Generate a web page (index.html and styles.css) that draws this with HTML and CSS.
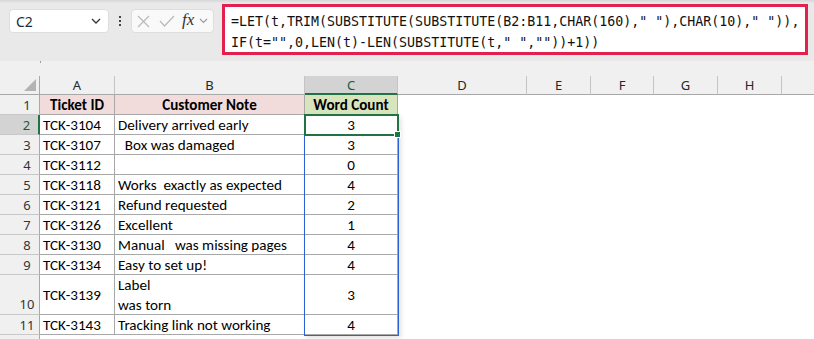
FILE: index.html
```html
<!DOCTYPE html>
<html lang="en">
<head>
    <meta charset="UTF-8">
    <meta name="viewport" content="width=device-width, initial-scale=1.0">
    <title>Word Count</title>
    <link rel="stylesheet" href="styles.css">
</head>
<body>
    <div class="formula-bar">
        <div class="name-box">
            <span>C2</span>
            <svg width="10" height="6" viewBox="0 0 10 6"><path d="M1 1l4 4 4-4" fill="none" stroke="#333" stroke-width="1.3"/></svg>
        </div>
        <div class="dots"><i></i><i></i><i></i></div>
        <div class="fx-box">
            <svg width="13" height="13" viewBox="0 0 13 13"><path d="M1 1l11 11M12 1L1 12" stroke="#b9b9b9" stroke-width="1.2"/></svg>
            <svg width="16" height="12" viewBox="0 0 16 12"><path d="M1 6l4.5 5L15 1" fill="none" stroke="#b9b9b9" stroke-width="1.2"/></svg>
            <span class="fx">fx</span>
            <svg width="9" height="6" viewBox="0 0 9 6"><path d="M1 1l3.5 3.5L8 1" fill="none" stroke="#9a9a9a" stroke-width="1.1"/></svg>
        </div>
        <div class="formula">
            <div class="line">=LET(t,TRIM(SUBSTITUTE(SUBSTITUTE(B2:B11,CHAR(160)," "),CHAR(10)," ")),</div>
            <div class="line">IF(t="",0,LEN(t)-LEN(SUBSTITUTE(t," ",""))+1))</div>
        </div>
    </div>

    <div class="band"></div>

    <div class="sheet">
        <div class="corner"><span class="tri"></span></div>
        <div class="ch">A</div>
        <div class="ch">B</div>
        <div class="ch sel">C</div>
        <div class="ch">D</div>
        <div class="ch">E</div>
        <div class="ch">F</div>
        <div class="ch">G</div>
        <div class="ch">H</div>
        <div class="ch last"></div>

        <div class="blank"></div>

        <div class="rh">1</div>
        <div class="c head pink">Ticket ID</div>
        <div class="c head pink">Customer Note</div>
        <div class="c head green">Word Count</div>

        <div class="rh sel">2</div>
        <div class="c">TCK-3104</div>
        <div class="c">Delivery arrived early</div>
        <div class="c num">3</div>

        <div class="rh">3</div>
        <div class="c">TCK-3107</div>
        <div class="c">  Box was damaged</div>
        <div class="c num">3</div>

        <div class="rh">4</div>
        <div class="c">TCK-3112</div>
        <div class="c"></div>
        <div class="c num">0</div>

        <div class="rh">5</div>
        <div class="c">TCK-3118</div>
        <div class="c">Works  exactly as expected</div>
        <div class="c num">4</div>

        <div class="rh">6</div>
        <div class="c">TCK-3121</div>
        <div class="c">Refund requested</div>
        <div class="c num">2</div>

        <div class="rh">7</div>
        <div class="c">TCK-3126</div>
        <div class="c">Excellent</div>
        <div class="c num">1</div>

        <div class="rh">8</div>
        <div class="c">TCK-3130</div>
        <div class="c">Manual   was missing pages</div>
        <div class="c num">4</div>

        <div class="rh">9</div>
        <div class="c">TCK-3134</div>
        <div class="c">Easy to set up!</div>
        <div class="c num">4</div>

        <div class="rh bottom">10</div>
        <div class="c">TCK-3139</div>
        <div class="c wrap">Label<br>was torn</div>
        <div class="c num">3</div>

        <div class="rh">11</div>
        <div class="c">TCK-3143</div>
        <div class="c">Tracking link not working</div>
        <div class="c num">4</div>

        <div class="rh"></div>
        <div class="empty"></div>

        <!-- spill range and active cell sit over the grid -->
        <div class="spill"></div>
        <div class="active"><span class="handle"></span></div>
    </div>
</body>
</html>
```

FILE: styles.css
```css
body {
    margin: 0;
    width: 814px;
    height: 339px;
    overflow: hidden;
    background-color: #fff;
    font-family: "Segoe UI", "Noto Sans", Arial, sans-serif;
}
.formula-bar {
    height: 61px;
    background: linear-gradient(#d6d6d6, #e9e9e9 3px);
    display: flex;
    align-items: flex-start;
    box-sizing: border-box;
}
.name-box {
    margin: 9px 0 0 9px;
    width: 100px;
    height: 24px;
    box-sizing: border-box;
    background-color: #fff;
    border: 1px solid #dedede;
    border-radius: 4px;
    display: flex;
    align-items: center;
    justify-content: space-between;
    padding: 0 7px 0 6px;
    font-size: 14px;
    color: #1e2a44;
}
.dots {
    margin: 16px 0 0 10px;
    width: 3px;
    display: flex;
    flex-direction: column;
    gap: 2px;
}
.dots i {
    display: block;
    width: 2px;
    height: 2px;
    background-color: #444;
}
.fx-box {
    margin: 9px 0 0 9px;
    width: 83px;
    height: 24px;
    box-sizing: border-box;
    background-color: #f9f9f9;
    border: 1px solid #dedede;
    border-radius: 4px;
    display: flex;
    align-items: center;
    padding: 0 0 0 5px;
}
.fx-box svg:first-child {
    margin-right: 9px;
}
.fx {
    margin: -2px 5px 0 7px;
    font-family: "Liberation Serif", serif;
    font-style: italic;
    font-size: 17px;
    color: #333;
}
.formula {
    margin: 4px 0 0 8px;
    width: 586px;
    height: 51px;
    box-sizing: border-box;
    background-color: #fff;
    border: 3px solid #e2214e;
    padding: 4px 0 0 6px;
    font-family: "DejaVu Sans Mono", "Liberation Mono", monospace;
    font-size: 13.3px;
    line-height: 21px;
    color: #111;
}
.formula .line {
    white-space: pre;
}
.band {
    height: 15px;
    background-color: #f0f0f0;
    position: relative;
}
.band::after {
    content: "";
    position: absolute;
    left: 40px;
    top: 0;
    width: 1px;
    height: 2px;
    background-color: #999;
}
.sheet {
    position: relative;
    display: grid;
    grid-template-columns: 40px 75px 190px 93px 129px 64px 63px 64px 64px 1fr;
    grid-template-rows: 19px repeat(9, 20px) 40px 20px 20px;
    font-family: Carlito, Calibri, Lato, sans-serif;
    font-size: 15.1px;
    color: #000;
}
.corner {
    background-color: #f0f0f0;
    border-right: 1px solid #a8a8a8;
    border-bottom: 1px solid #a8a8a8;
    position: relative;
}
.tri {
    position: absolute;
    right: 3px;
    bottom: 3px;
    width: 0;
    height: 0;
    border-left: 12px solid transparent;
    border-bottom: 12px solid #b4b4b4;
}
.ch {
    background-color: #f0f0f0;
    border-right: 1px solid #c4c4c4;
    border-bottom: 1px solid #a8a8a8;
    font-family: "Segoe UI", "Noto Sans", Arial, sans-serif;
    font-size: 13px;
    color: #262626;
    display: flex;
    align-items: center;
    justify-content: center;
}
.ch.last {
    border-right: none;
}
.ch.sel {
    background-color: #d3d3d3;
    border-bottom: 2px solid #217346;
    color: #185c37;
}
.rh {
    background-color: #f0f0f0;
    border-right: 1px solid #a8a8a8;
    border-bottom: 1px solid #c8c8c8;
    font-family: "Segoe UI", "Noto Sans", Arial, sans-serif;
    font-size: 13px;
    color: #333;
    display: flex;
    align-items: center;
    justify-content: center;
    padding-left: 15px;
}
.rh.sel {
    background-color: #d3d3d3;
    border-right: 2px solid #217346;
    color: #185c37;
}
.rh.bottom {
    align-items: flex-end;
    padding-bottom: 1px;
}
.c {
    border-right: 1px solid #a8a8a8;
    border-bottom: 1px solid #a8a8a8;
    padding: 0 3px;
    display: flex;
    align-items: center;
    white-space: pre;
    overflow: hidden;
}
.c.wrap {
    display: block;
    line-height: 20px;
}
.head {
    justify-content: center;
    font-weight: bold;
}
.pink {
    background-color: #f2dcdb;
}
.green {
    background-color: #d8e4bc;
}
.num {
    justify-content: center;
}
.blank {
    grid-column: 5 / -1;
    grid-row: 2 / -1;
    background-color: #fff;
}
.empty {
    grid-column: span 3;
}
.spill {
    position: absolute;
    left: 304px;
    top: 39px;
    width: 95px;
    height: 221px;
    box-sizing: border-box;
    border: 1px solid #2e62d4;
    box-shadow: 2px 2px 5px rgba(0, 0, 0, 0.12);
}
.active {
    position: absolute;
    left: 304px;
    top: 38px;
    width: 95px;
    height: 22px;
    box-sizing: border-box;
    border: 2px solid #217346;
}
.handle {
    position: absolute;
    right: -4px;
    bottom: -4px;
    width: 5px;
    height: 5px;
    background-color: #217346;
    border: 1px solid #fff;
}
```
